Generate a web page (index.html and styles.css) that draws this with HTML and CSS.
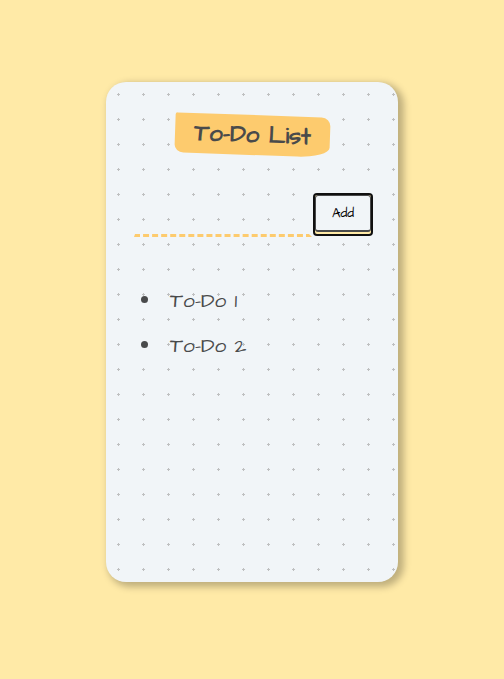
FILE: index.html
```html
<!DOCTYPE html>
<html lang="en">
<head>
<meta charset="utf-8">
<title>To-Do List</title>
<link rel="stylesheet" href="styles.css">
</head>
<body>
<main class="container">
  <div class="heading"><h1>To-Do List</h1></div>
  <div class="form">
    <input type="text" aria-label="New item">
    <button><span>Add</span></button>
  </div>
  <ul>
    <li>To-Do 1</li>
    <li>To-Do 2</li>
  </ul>
</main>
</body>
</html>
```
FILE: styles.css
```css
* { box-sizing: border-box; }
body {
  margin: 0;
  padding-top: 82px;
  min-height: 679px;
  background: #ffeaa7;
  font-family: "Architects Daughter", Lato, sans-serif;
  color: #494a4b;
}
.container {
  width: 292px;
  height: 500px;
  margin: 0 auto;
  padding: 33px 25px 0 28px;
  border-radius: 20px;
  background-color: #f1f5f8;
  background-image: radial-gradient(#bfc0c1 7.2%, transparent 0);
  background-size: 25px 25px;
  box-shadow: 4px 3px 7px 2px #00000040;
}
.heading { display: flex; padding-left: 41px; }
h1 {
  display: flex;
  align-items: center;
  justify-content: center;
  width: 155px;
  height: 40px;
  margin: 0;
  background: #fdcb6e;
  border-radius: 2px 9px 32px 9px / 2px 9px 10px 8px;
  transform: rotate(2deg);
  font-size: 24px;
  line-height: 1;
  white-space: nowrap;
}
.form {
  display: flex;
  align-items: flex-end;
  height: 43px;
  margin-top: 39px;
}
input {
  width: 178px;
  height: 30px;
  padding: 0;
  border: 3px dashed transparent;
  border-left-width: 1px;
  border-bottom-color: #fdcb6e;
  background: transparent;
  outline: none;
}
button {
  display: flex;
  align-items: flex-start;
  width: 56px;
  height: 39px;
  margin: 0 0 3px 3px;
  padding: 0;
  border: 0;
  border-radius: 2px;
  background: #ffeaa7;
  color: #000;
  font: 13.33px "Architects Daughter", Lato, sans-serif;
  box-shadow: 0 0 0 2px #101010;
}
button span {
  display: flex;
  align-items: center;
  justify-content: center;
  width: 56px;
  height: 37px;
  border: 1px solid #494a4b;
  border-bottom-width: 2px;
  border-radius: 3px;
  background: #f1f5f8;
}
ul { list-style: none; margin: 40px 0 0; padding: 0 0 0 7px; }
li {
  display: flex;
  align-items: center;
  height: 45px;
  padding-top: 1px;
  font-size: 20.8px;
}
li::before {
  content: "";
  width: 7px;
  height: 7px;
  margin: -1px 22px 0 0;
  border-radius: 50%;
  background: #494a4b;
}
```
